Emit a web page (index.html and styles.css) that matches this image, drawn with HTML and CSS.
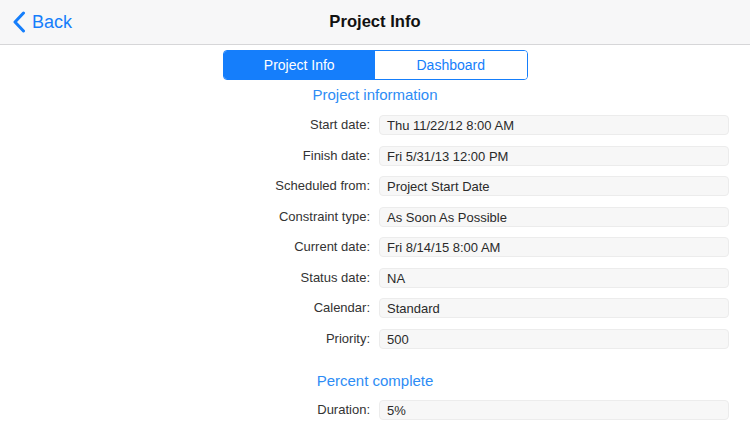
FILE: index.html
```html
<!DOCTYPE html>
<html>
<head>
<meta charset="utf-8">
<link rel="stylesheet" href="styles.css">
</head>
<body>
<header class="navbar">
  <a class="back">
    <svg class="chev" width="14" height="22" viewBox="0 0 14 22"><path d="M11.5 2 L3 11 L11.5 20" fill="none" stroke="#157efb" stroke-width="3" stroke-linecap="round" stroke-linejoin="round"/></svg>
    <span>Back</span>
  </a>
  <h1 class="title">Project Info</h1>
</header>
<main class="content">
  <div class="segmented">
    <div class="seg active">Project Info</div>
    <div class="seg">Dashboard</div>
  </div>
  <h2 class="section">Project information</h2>
  <div class="form">
    <label>Start date:</label><div class="field">Thu 11/22/12 8:00 AM</div>
    <label>Finish date:</label><div class="field">Fri 5/31/13 12:00 PM</div>
    <label>Scheduled from:</label><div class="field">Project Start Date</div>
    <label>Constraint type:</label><div class="field">As Soon As Possible</div>
    <label>Current date:</label><div class="field">Fri 8/14/15 8:00 AM</div>
    <label>Status date:</label><div class="field">NA</div>
    <label>Calendar:</label><div class="field">Standard</div>
    <label>Priority:</label><div class="field">500</div>
  </div>
  <h2 class="section section2">Percent complete</h2>
  <div class="form">
    <label>Duration:</label><div class="field">5%</div>
  </div>
</main>
</body>
</html>
```
FILE: styles.css
```css
* { box-sizing: border-box; }
html, body { margin: 0; padding: 0; background: #fff; }
body {
  width: 750px; height: 422px; overflow: hidden;
  font-family: "Liberation Sans", Arial, sans-serif;
  color: #333;
}
.navbar {
  height: 45px;
  background: #f7f7f8;
  border-bottom: 1px solid #d6d6d8;
  display: flex; align-items: center; justify-content: center;
  position: relative;
}
.back {
  position: absolute; left: 12px; top: 11px;
  display: flex; align-items: center; gap: 6px;
  color: #157efb; font-size: 18px;
}
.back span { line-height: 22px; }
.title {
  margin: 0; font-size: 16.6px; font-weight: bold; color: #111;
  line-height: 44px;
}
.content { display: flex; flex-direction: column; align-items: center; padding-top: 5px; }
.segmented {
  display: flex; width: 305px; height: 30px;
  border: 1px solid #157efb; border-radius: 4px; overflow: hidden;
}
.seg {
  flex: 1; display: flex; align-items: center; justify-content: center;
  font-size: 14px; color: #157efb; background: #fff;
}
.seg.active { background: #157efb; color: #fff; }
.section {
  margin: 0; font-weight: normal; font-size: 15px; color: #2d8cf5;
  line-height: 20px; margin-top: 5px; margin-bottom: 10px;
}
.section2 { margin-top: 22px; margin-bottom: 9px; }
.form {
  width: 750px;
  display: grid;
  grid-template-columns: 370px 350px;
  column-gap: 9px;
  row-gap: 10.5px;
}
.form label {
  text-align: right; font-size: 13px; color: #333;
  line-height: 20px;
}
.field {
  height: 20px; line-height: 19px;
  background: #f7f7f7; border: 1px solid #ececec; border-radius: 4px;
  padding-left: 7px; font-size: 13px; color: #2a2a2a;
}
```
